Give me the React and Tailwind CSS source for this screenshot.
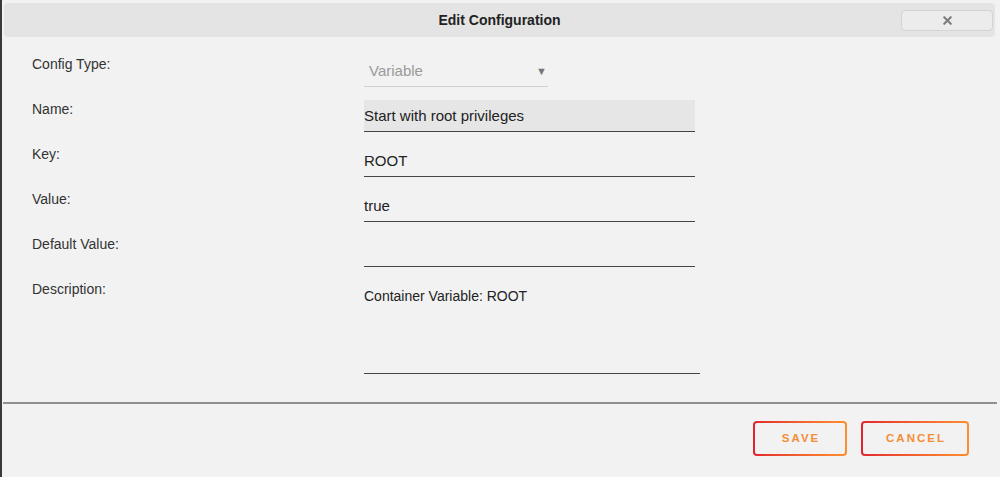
import React from "react";
import { X } from "lucide-react";

const font = { fontFamily: '"Liberation Sans", Arial, sans-serif' };

function Label({ children }) {
  return <div className="text-[14px] leading-[18px] text-[#333]">{children}</div>;
}

function LineInput({ value, filled }) {
  return (
    <div
      className={`w-[331px] h-[32px] border-b border-[#444] flex items-center pt-[2px] text-[15px] text-[#222] ${
        filled ? "bg-[#e6e6e6]" : ""
      }`}
    >
      {value}
    </div>
  );
}

function GradientButton({ children, width }) {
  return (
    <div className={`${width} h-[35px] rounded-[4px] p-[2px] bg-gradient-to-r from-[#e2232f] to-[#ff8e2e]`}>
      <div className="w-full h-full rounded-[2px] bg-[#f2f2f2] flex items-center justify-center pl-[2px] text-[11.5px] font-bold tracking-[2px] text-[#f58d38]">
        {children}
      </div>
    </div>
  );
}

export default function App() {
  return (
    <div style={font} className="w-full h-[477px] bg-[#f2f2f2] border-l-2 border-[#3a3a3a] flex flex-col">
      {/* Header */}
      <div className="ml-[2px] mr-[5px] mt-[3px] h-[34px] rounded-[4px] bg-[#e4e4e4] grid grid-cols-[1fr_auto_1fr] items-center">
        <div />
        <div className="text-[14px] font-bold text-[#222]">Edit Configuration</div>
        <div className="flex justify-end pr-[2px]">
          <button className="w-[92px] h-[21px] rounded-[4px] bg-[#ececec] border border-[#d3d3d3] flex items-center justify-center">
            <X size={13} strokeWidth={4} className="text-[#7d7d7d]" />
          </button>
        </div>
      </div>

      {/* Form */}
      <div className="grid grid-cols-[332px_auto] gap-y-[13px] pl-[30px] mt-[18px]">
        <Label>Config Type:</Label>
        <div className="w-[184px] h-[32px] border-b border-[#cfcfcf] flex items-center justify-between pr-[1px] pt-[1px] text-[15px] text-[#9a9a9a]">
          <span className="pl-[5px]">Variable</span>
          <span className="text-[11px] text-[#777]">▼</span>
        </div>

        <Label>Name:</Label>
        <LineInput value="Start with root privileges" filled />

        <Label>Key:</Label>
        <LineInput value="ROOT" />

        <Label>Value:</Label>
        <LineInput value="true" />

        <Label>Default Value:</Label>
        <LineInput value="" />

        <Label>Description:</Label>
        <div className="w-[336px] h-[94px] border-b border-[#444] pt-[6px] text-[14px] leading-[20px] text-[#222]">
          Container Variable: ROOT
        </div>
      </div>

      {/* Divider */}
      <div className="ml-[1px] mr-[3px] mt-[28px] h-[2px] bg-[#8f8f8f]" />

      {/* Actions */}
      <div className="flex justify-end gap-[14px] mr-[31px] mt-[17px]">
        <GradientButton width="w-[94px]">SAVE</GradientButton>
        <GradientButton width="w-[108px]">CANCEL</GradientButton>
      </div>
    </div>
  );
}
